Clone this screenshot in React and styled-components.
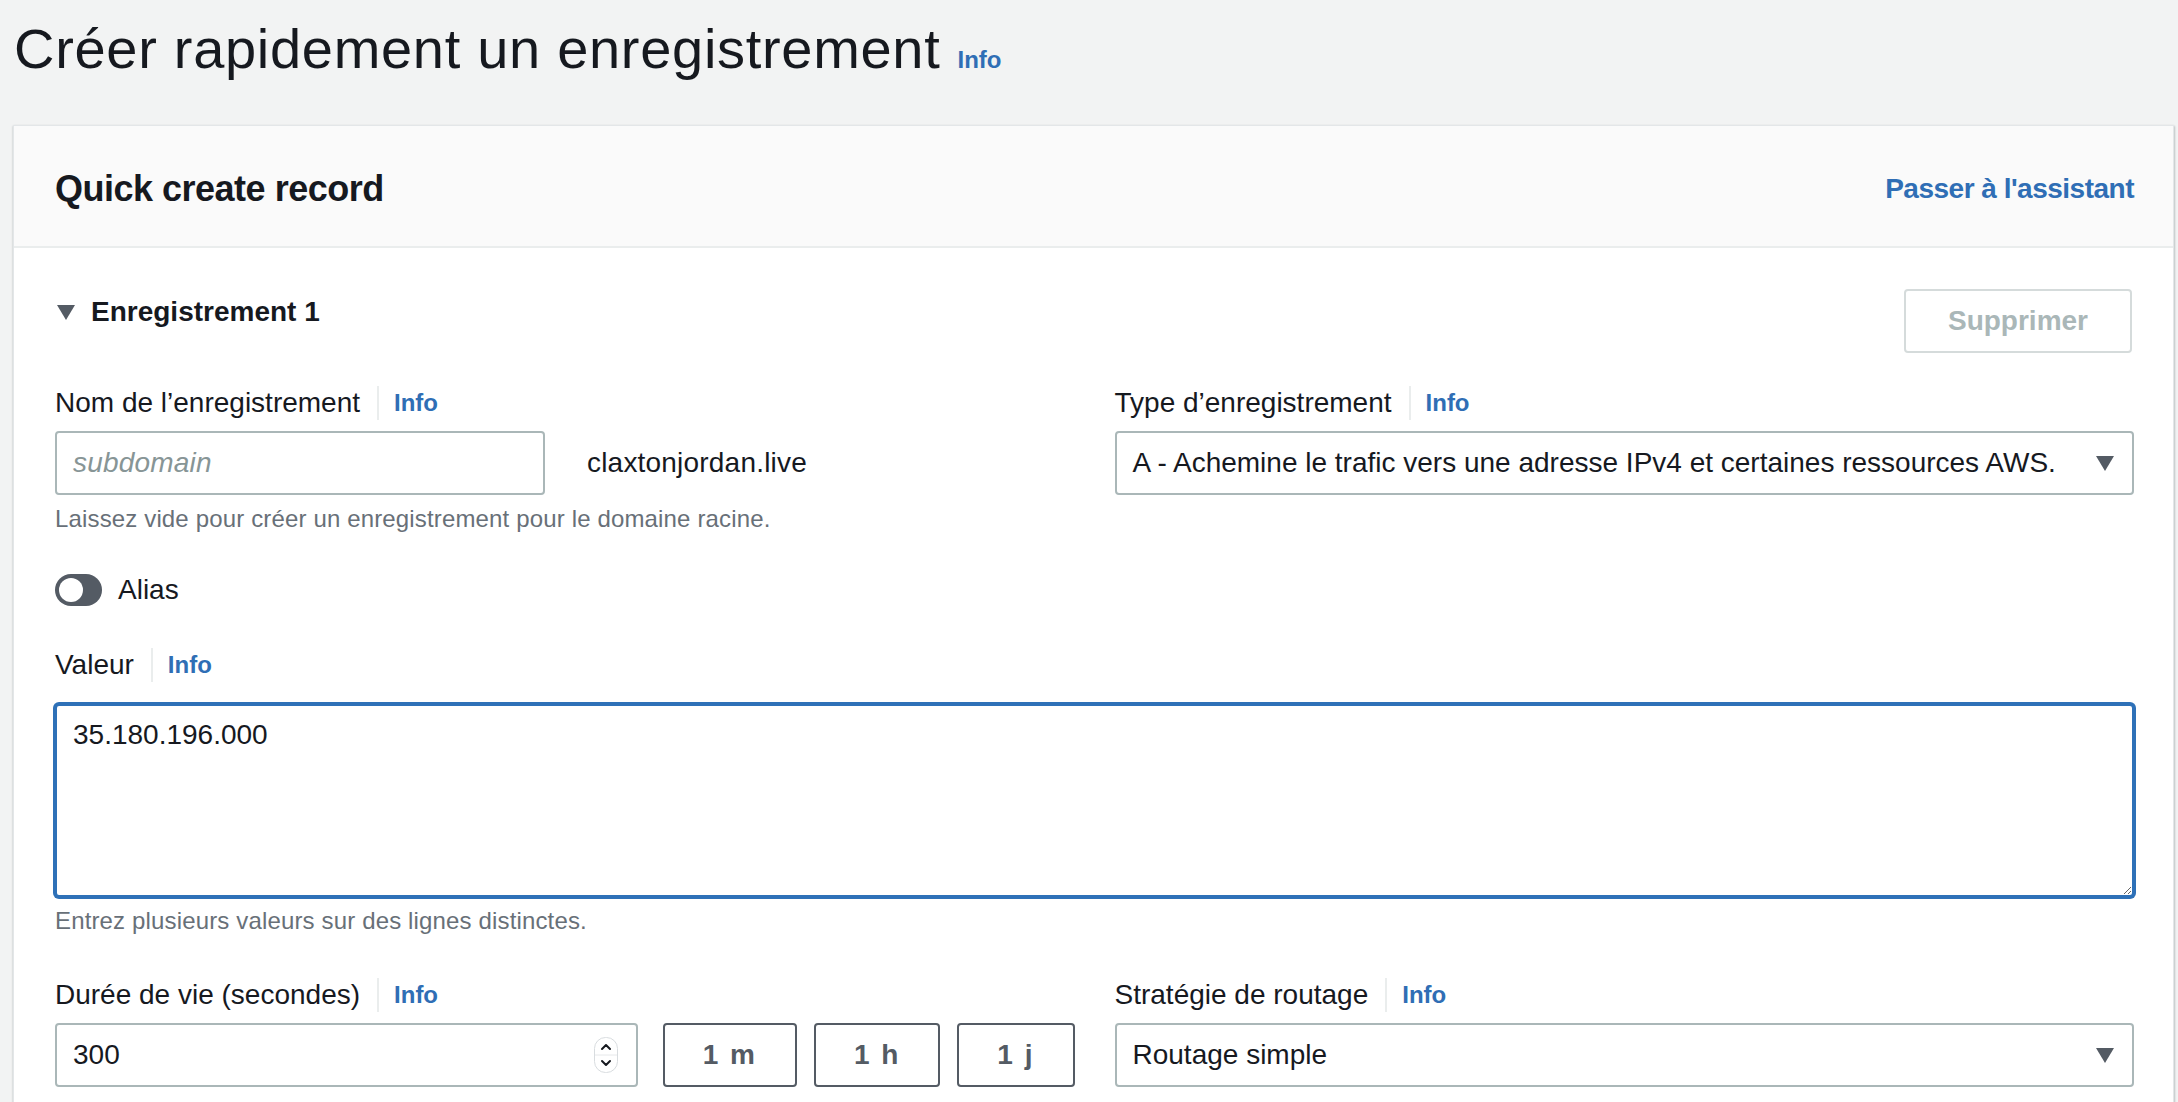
import React from "react";
import styled, { createGlobalStyle } from "styled-components";

const GlobalStyle = createGlobalStyle`
    html, body {
        margin: 0;
        padding: 0;
        overflow: hidden;
        background: #f2f3f3;
    }
    body {
        font-family: "Liberation Sans", Arial, sans-serif;
        color: #16191f;
    }
    * { box-sizing: border-box; }
`;

const Page = styled.div`
    padding: 0 4px 0 13px;
`;

const TitleBar = styled.div`
    display: flex;
    align-items: baseline;
    gap: 17px;
    padding: 17px 0 0 1px;
    height: 125px;
`;

const Title = styled.h1`
    margin: 0;
    font-size: 56px;
    font-weight: 400;
    line-height: 64px;
    letter-spacing: 0.7px;
`;

const InfoLink = styled.a`
    font-size: 24px;
    font-weight: 700;
    color: #2f6eb5;
    text-decoration: none;
    line-height: 34px;
    ${(p) => p.$divided && `
        border-left: 2px solid #eaeded;
        padding-left: 15px;
        margin-left: 17px;
    `}
`;

const Container = styled.section`
    background: #fff;
    border: 1px solid #e3e6e8;
    box-shadow: 0 1px 2px rgba(0, 28, 36, 0.25), 1px 1px 2px rgba(0, 28, 36, 0.12);
`;

const Header = styled.header`
    height: 122px;
    display: flex;
    align-items: center;
    justify-content: space-between;
    padding: 6px 39px 0 41px;
    background: #fafafa;
    border-bottom: 2px solid #eaeded;
`;

const HeaderTitle = styled.h2`
    margin: 0;
    font-size: 36px;
    font-weight: 700;
    letter-spacing: -0.5px;
`;

const HeaderLink = styled.a`
    font-size: 28px;
    font-weight: 700;
    color: #2f6eb5;
    text-decoration: none;
    letter-spacing: -0.5px;
`;

const Body = styled.div`
    padding: 41px 39px 0 41px;
`;

const SectionTop = styled.div`
    display: flex;
    justify-content: space-between;
    align-items: flex-start;
    padding-right: 2px;
`;

const Expander = styled.div`
    display: flex;
    align-items: center;
    gap: 16px;
    margin: 3px 0 0 2px;
    line-height: 40px;
    font-size: 28px;
    font-weight: 700;
`;

const Caret = styled.span`
    width: 0;
    height: 0;
    border-left: ${(p) => p.$w / 2}px solid transparent;
    border-right: ${(p) => p.$w / 2}px solid transparent;
    border-top: ${(p) => p.$h}px solid #545b64;
`;

const Button = styled.button`
    height: 64px;
    padding: 0 ${(p) => (p.$disabled ? 42 : 38)}px;
    border-radius: 4px;
    background: #fff;
    font-family: inherit;
    font-size: 28px;
    font-weight: 700;
    border: 2px solid ${(p) => (p.$disabled ? "#d5dbdb" : "#545b64")};
    color: ${(p) => (p.$disabled ? "#aab7b8" : "#545b64")};
    letter-spacing: ${(p) => (p.$wide ? "2px" : "0")};
    flex: none;
`;

const Grid = styled.div`
    display: grid;
    grid-template-columns: 1fr 1fr;
    column-gap: 40px;
    margin-top: ${(p) => p.$top}px;
`;

const Field = styled.div`
    display: flex;
    flex-direction: column;
    margin-top: ${(p) => p.$top || 0}px;
`;

const LabelRow = styled.div`
    display: flex;
    align-items: center;
    height: 43px;
    padding-top: 3px;
    margin-bottom: ${(p) => p.$gap || 8}px;
`;

const Label = styled.span`
    font-size: 28px;
    line-height: 40px;
`;

const Control = styled.div`
    height: 64px;
    display: flex;
    align-items: center;
    justify-content: space-between;
    border: 2px solid #aab7b8;
    border-radius: 4px;
    padding: 0 18px 0 16px;
    font-size: 28px;
    background: #fff;
    width: ${(p) => (p.$width ? `${p.$width}px` : "auto")};
    flex: ${(p) => (p.$grow ? 1 : "none")};
    margin-right: ${(p) => p.$after || 0}px;
`;

const Placeholder = styled.span`
    font-style: italic;
    color: #879596;
`;

const Inline = styled.div`
    display: flex;
    align-items: center;
    gap: ${(p) => p.$gap}px;
    font-size: 28px;
    letter-spacing: 0.2px;
`;

const Help = styled.div`
    margin-top: 8px;
    font-size: 24px;
    line-height: 32px;
    color: #687078;
    letter-spacing: 0.15px;
`;

const ToggleRow = styled.div`
    display: flex;
    align-items: center;
    gap: 16px;
    height: 40px;
    margin-top: 35px;
    font-size: 28px;
`;

const Toggle = styled.span`
    width: 47px;
    height: 32px;
    border-radius: 16px;
    background: #545b64;
    display: flex;
    align-items: center;
    padding-left: 4px;
    &::before {
        content: "";
        width: 24px;
        height: 24px;
        border-radius: 50%;
        background: #fff;
    }
`;

const TextArea = styled.textarea`
    display: block;
    width: 100%;
    height: 193px;
    border: 2px solid #2e71b8;
    box-shadow: 0 0 0 2px #2e71b8;
    border-radius: 4px;
    padding: 9px 16px;
    font-family: inherit;
    font-size: 28px;
    line-height: 40px;
    color: #16191f;
    resize: vertical;
    outline: none;
`;

const TtlRow = styled.div`
    display: flex;
    gap: 17px;
`;

const Spinner = () => (
    <svg width="24" height="36" viewBox="0 0 24 36">
        <rect x="0.5" y="0.5" width="23" height="35" rx="11" fill="#fff" stroke="#d8dcdf" />
        <line x1="1" y1="18" x2="23" y2="18" stroke="#e6e8ea" />
        <path d="M8 12 L12 8 L16 12" fill="none" stroke="#16191f" strokeWidth="2" strokeLinecap="round" strokeLinejoin="round" />
        <path d="M8 24 L12 28 L16 24" fill="none" stroke="#16191f" strokeWidth="2" strokeLinecap="round" strokeLinejoin="round" />
    </svg>
);

function FieldLabel({ children, gap }) {
    return (
        <LabelRow $gap={gap}>
            <Label>{children}</Label>
            <InfoLink href="#" $divided>Info</InfoLink>
        </LabelRow>
    );
}

function Select({ value }) {
    return (
        <Control>
            <span>{value}</span>
            <Caret $w={19} $h={15} />
        </Control>
    );
}

export default function App() {
    return (
        <>
            <GlobalStyle />
            <Page>
                <TitleBar>
                    <Title>Créer rapidement un enregistrement</Title>
                    <InfoLink href="#">Info</InfoLink>
                </TitleBar>

                <Container>
                    <Header>
                        <HeaderTitle>Quick create record</HeaderTitle>
                        <HeaderLink href="#">Passer à l'assistant</HeaderLink>
                    </Header>

                    <Body>
                        <SectionTop>
                            <Expander>
                                <Caret $w={18} $h={15} />
                                Enregistrement 1
                            </Expander>
                            <Button $disabled>Supprimer</Button>
                        </SectionTop>

                        <Grid $top={27}>
                            <Field>
                                <FieldLabel>Nom de l’enregistrement</FieldLabel>
                                <Inline $gap={42}>
                                    <Control $width={490}>
                                        <Placeholder>subdomain</Placeholder>
                                    </Control>
                                    <span>claxtonjordan.live</span>
                                </Inline>
                                <Help>Laissez vide pour créer un enregistrement pour le domaine racine.</Help>
                            </Field>
                            <Field>
                                <FieldLabel>Type d’enregistrement</FieldLabel>
                                <Select value="A - Achemine le trafic vers une adresse IPv4 et certaines ressources AWS." />
                            </Field>
                        </Grid>

                        <ToggleRow>
                            <Toggle />
                            Alias
                        </ToggleRow>

                        <Field $top={32}>
                            <FieldLabel gap={19}>Valeur</FieldLabel>
                            <TextArea defaultValue="35.180.196.000" spellCheck={false} />
                            <Help>Entrez plusieurs valeurs sur des lignes distinctes.</Help>
                        </Field>

                        <Grid $top={35}>
                            <Field>
                                <FieldLabel>Durée de vie (secondes)</FieldLabel>
                                <TtlRow>
                                    <Control $grow $after={8}>
                                        <span>300</span>
                                        <Spinner />
                                    </Control>
                                    <Button $wide>1 m</Button>
                                    <Button $wide>1 h</Button>
                                    <Button $wide>1 j</Button>
                                </TtlRow>
                                <Help>Valeurs recommandées : 60 à 172 800 (deux jours)</Help>
                            </Field>
                            <Field>
                                <FieldLabel>Stratégie de routage</FieldLabel>
                                <Select value="Routage simple" />
                            </Field>
                        </Grid>
                    </Body>
                </Container>
            </Page>
        </>
    );
}
